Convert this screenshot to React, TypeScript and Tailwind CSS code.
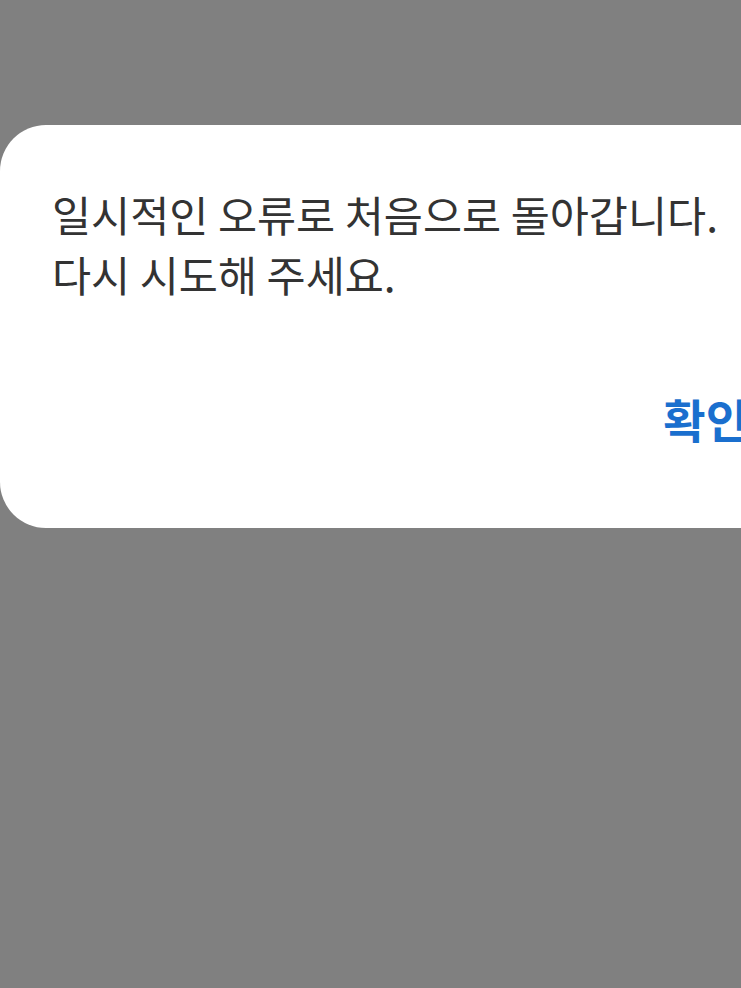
export default function App() {
  return (
    <div
      className="w-[741px] h-[988px] overflow-hidden bg-[#808080] pt-[125px]"
      style={{ fontFamily: '"Noto Sans CJK KR", "Noto Sans", sans-serif' }}
    >
      {/* dialog card, right side runs off screen */}
      <div className="w-[800px] h-[403px] bg-white rounded-[46px] flex flex-col pl-[52px] pt-[59px]">
        <p className="text-[42.5px] leading-[60px] text-[#333333]">
          일시적인 오류로 처음으로 돌아갑니다.
          <br />
          다시 시도해 주세요.
        </p>
        <div className="flex justify-end pr-[52px] mt-[86px]">
          <button className="text-[46px] leading-[56px] font-bold text-[#1a6fce]">확인</button>
        </div>
      </div>
    </div>
  );
}
